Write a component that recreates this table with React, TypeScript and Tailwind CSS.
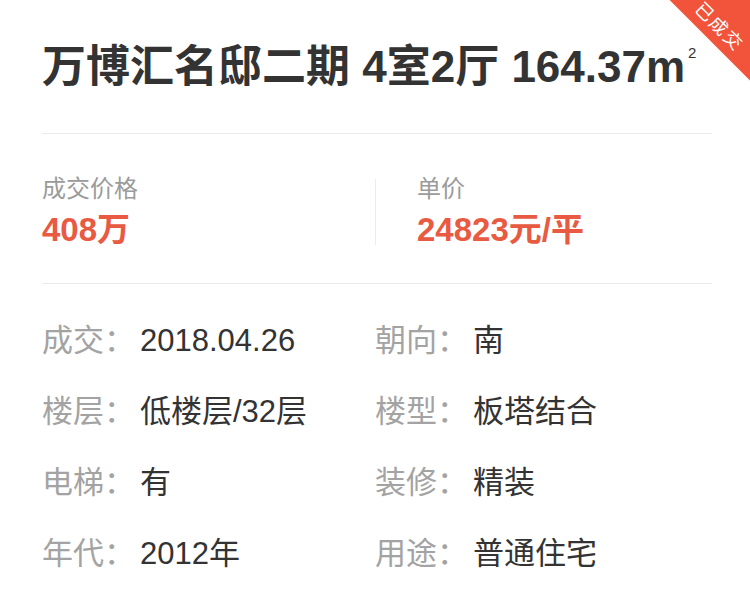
import React from "react";

const FONT = "font-['Liberation_Sans','Noto_Sans_CJK_SC',sans-serif]";

const details: [string, string][] = [
  ["成交", "2018.04.26"],
  ["朝向", "南"],
  ["楼层", "低楼层/32层"],
  ["楼型", "板塔结合"],
  ["电梯", "有"],
  ["装修", "精装"],
  ["年代", "2012年"],
  ["用途", "普通住宅"],
];

const App = () => {
  return (
    <div className={`relative w-[750px] h-[589px] overflow-hidden bg-white ${FONT}`}>
      {/* sold ribbon */}
      <div className="absolute left-[629px] top-[-13px] w-[200px] h-[60px] rotate-45 bg-[#f1533b] flex items-end justify-center pb-[5px]">
        <span className="text-white text-[18px] leading-[22px] tracking-[2px]">已成交</span>
      </div>

      <div className="pl-[42px] pr-[38px]">
        <div className="pt-[41px] pb-[40px] border-b border-[#ebebeb]">
          <h1 className="text-[44px] leading-[52px] font-bold text-[#333] whitespace-nowrap">
            万博汇名邸二期 4室2厅 164.37m
            <sup className="text-[15px] font-normal ml-[3px] top-[-24px]">2</sup>
          </h1>
        </div>

        <div className="flex items-center pt-[40px] pb-[34px] border-b border-[#ebebeb]">
          <div className="w-[333px] flex flex-col gap-[7px]">
            <span className="text-[24px] leading-[30px] text-[#9b9b9b]">成交价格</span>
            <span className="text-[33px] leading-[38px] font-bold text-[#e85a41]">408万</span>
          </div>
          <div className="w-px h-[66px] bg-[#ececec]" />
          <div className="pl-[41px] flex flex-col gap-[7px]">
            <span className="text-[24px] leading-[30px] text-[#9b9b9b]">单价</span>
            <span className="text-[33px] leading-[38px] font-bold text-[#e85a41]">24823元/平</span>
          </div>
        </div>

        <div className="grid grid-cols-[333px_1fr] pt-[22px]">
          {details.map(([k, v]) => (
            <div key={k} className="flex items-center h-[71px] text-[31px]">
              <span className="w-[98px] text-[#a3a3a3]">{k}：</span>
              <span className="text-[#333]">{v}</span>
            </div>
          ))}
        </div>
      </div>
    </div>
  );
};

export default App;
